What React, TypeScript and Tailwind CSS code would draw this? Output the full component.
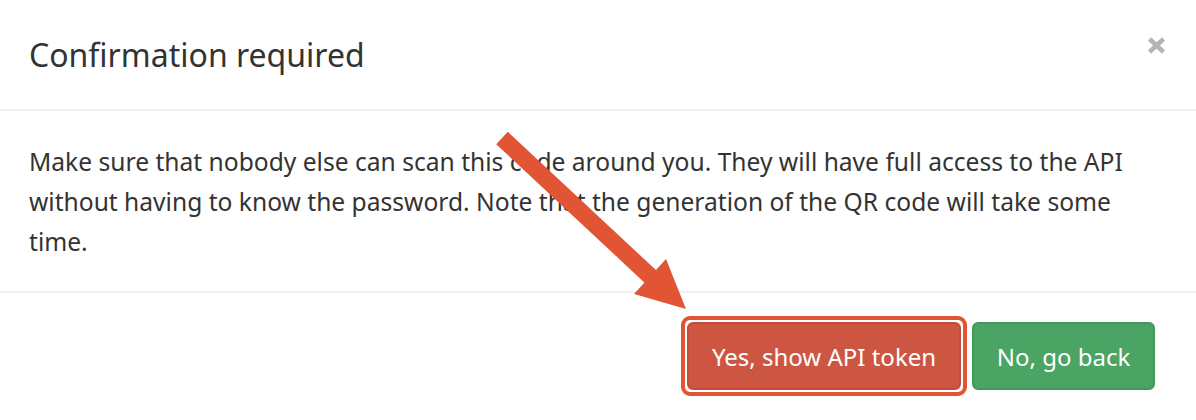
import React from 'react'

const FONT = { fontFamily: '"Noto Sans", "Open Sans", sans-serif' }

function CloseIcon() {
  return (
    <svg width="19" height="17" viewBox="0 0 19 17" className="block">
      <path d="M2.5 2 L16.5 15 M16.5 2 L2.5 15" stroke="#b4b4b4" strokeWidth="4.5" strokeLinecap="butt" />
    </svg>
  )
}

function Arrow() {
  return (
    <svg
      className="pointer-events-none absolute left-0 top-0"
      width="1196"
      height="420"
      viewBox="0 0 1196 420"
    >
      <line x1="502" y1="138" x2="652" y2="278" stroke="#e25534" strokeWidth="17" strokeLinecap="butt" />
      <polygon points="634,294 666,259 686,309" fill="#e25534" />
    </svg>
  )
}

export default function App() {
  return (
    <div className="relative h-[420px] w-[1196px] overflow-hidden bg-white text-[#333333]" style={FONT}>
      {/* Header */}
      <div className="flex h-[111px] items-start justify-between border-b-2 border-[#f0f0f0] pl-[29px] pr-[30px]">
        <h4 className="mt-[35px] text-[32px] leading-[40px] font-normal">Confirmation required</h4>
        <button className="mt-[37px]" title="Close">
          <CloseIcon />
        </button>
      </div>

      {/* Body */}
      <div className="h-[182px] border-b-2 border-[#f0f0f0] pl-[29px] pr-[34px] pt-[31px]">
        <p className="text-[24.6px] leading-[40px]">
          Make sure that nobody else can scan this code around you. They will have full access to the API
          without having to know the password. Note that the generation of the QR code will take some time.
        </p>
      </div>

      {/* Footer */}
      <div className="flex justify-end items-center gap-[5px] pr-[41px] pt-[23px]">
        <span className="rounded-[9px] border-[4px] border-[#e25534] p-[2px]">
          <button className="block h-[68px] w-[274px] rounded-[6px] border-2 border-[#c54b3a] bg-[#cd5643] pt-[2px] text-[24px] text-white">
            Yes, show API token
          </button>
        </span>
        <button className="block h-[68px] w-[183px] rounded-[6px] border-2 border-[#42995b] bg-[#4aa463] pt-[2px] text-[24px] text-white">
          No, go back
        </button>
      </div>

      <Arrow />
    </div>
  )
}
